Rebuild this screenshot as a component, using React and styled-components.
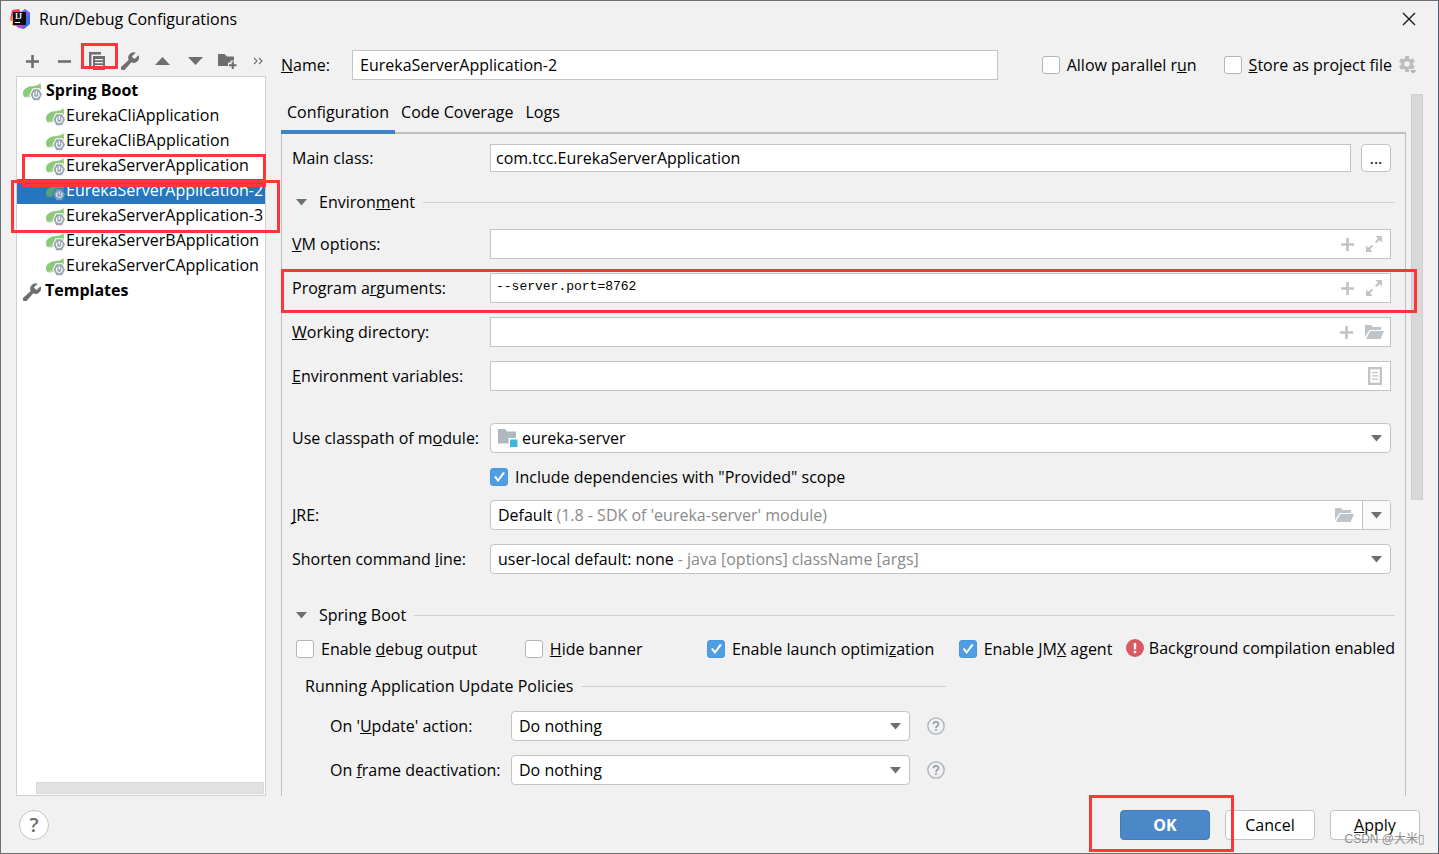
import React from 'react';
import styled, { createGlobalStyle } from 'styled-components';

const GlobalStyle = createGlobalStyle`
	:root {
		--main-text-color: #000;
		--gray-text-color: #8a8a8a;
		--panel-color: #f1f1f1;
		--border-color: #c4c4c4;
		--line-color: #d0d0d0;
		--icon-color: #6e6e6e;
		--light-icon-color: #bfc4c8;
		--accent-color: #4083c9;
		--mark-color: #fb3737;
	}

	* {
		box-sizing: border-box;
	}

	body {
		margin: 0;
		background: var(--panel-color);
	}

	body, button, input, select {
		font-family: 'Open Sans', 'Noto Sans', 'Noto Sans CJK SC', sans-serif;
		font-size: 16px;
		line-height: 22px;
		color: var(--main-text-color);
	}

	u {
		text-decoration-skip-ink: none;
	}

	svg {
		flex: none;
	}
`;

const Dialog = styled.div`
	position: relative;
	display: flex;
	flex-direction: column;
	min-height: 100vh;
	border: 1px solid #6f6f6f;
	border-right-color: #4f5b66;
	background: var(--panel-color);
`;

const TitleBar = styled.header`
	display: flex;
	align-items: center;
	gap: 8px;
	height: 37px;
	padding: 0 22px 2px 9px;
`;

const Title = styled.h1`
	flex: 1;
	margin: 0;
	font-size: 16px;
	font-weight: normal;
`;

const IconButton = styled.button`
	position: relative;
	display: flex;
	align-items: center;
	justify-content: ${({ $align }) => $align || 'center'};
	padding: 0;
	border: none;
	background: none;
	color: ${({ $light }) => ($light ? 'var(--light-icon-color)' : 'var(--icon-color)')};
`;

const Body = styled.div`
	flex: 1;
	display: flex;
	gap: 15px;
	padding: 0 15px;
`;

const Sidebar = styled.aside`
	display: flex;
	flex-direction: column;
	width: 250px;
	padding-top: 8px;
`;

const Toolbar = styled.div`
	display: grid;
	grid-template-columns: repeat(7, 1fr) 19px;
	height: 30px;
	padding-right: 3px;
`;

const Tree = styled.ul`
	flex: 1;
	display: flex;
	flex-direction: column;
	margin: 0;
	padding: 2px 0 0;
	border: 1px solid #d0d0d0;
	background: #fff;
	list-style: none;
`;

const TreeRow = styled.li`
	position: relative;
	display: flex;
	align-items: center;
	gap: ${({ $child }) => ($child ? 1 : 4)}px;
	height: 25px;
	padding-left: ${({ $child }) => ($child ? 29 : 6)}px;
	background: ${({ $selected }) => ($selected ? '#2675bf' : 'none')};
	color: ${({ $selected }) => ($selected ? '#fff' : 'inherit')};
	font-weight: ${({ $child }) => ($child ? 'normal' : 'bold')};
	white-space: nowrap;
`;

const TreeText = styled.span`
	padding-bottom: 3px;
`;

const TreeScroll = styled.li`
	height: 12px;
	margin: auto 1px 1px 19px;
	border: 1px solid #d8d8d8;
	background: #e2e2e2;
`;

const Main = styled.main`
	flex: 1;
	min-width: 0;
	display: flex;
	flex-direction: column;
	padding-top: 12px;
`;

const NameRow = styled.div`
	display: flex;
	align-items: center;
	height: 30px;
	padding-right: 6px;
`;

const NameLabel = styled.label`
	width: 71px;
`;

const NameInput = styled.input`
	flex: 1;
	min-width: 0;
	height: 30px;
	margin-right: 44px;
	padding: 0 7px;
	border: 1px solid var(--border-color);
	background: #fff;
`;

const CheckLabel = styled.label`
	display: flex;
	align-items: center;
	gap: 7px;
	height: 20px;
	white-space: nowrap;
`;

const Checkbox = styled.input`
	appearance: none;
	flex: none;
	width: 18px;
	height: 18px;
	margin: 0;
	border: 1px solid #b4b4b4;
	border-radius: 3px;
	background: #fff;

	&:checked {
		border-color: #4a96de;
		background: #4f9ee3;
	}

	&:checked::before {
		content: '';
		display: block;
		height: 16px;
		background: #fff;
		clip-path: polygon(3px 8px, 5px 7px, 7px 10px, 12px 3px, 14px 4px, 7px 13px);
	}
`;

const StoreGroup = styled.div`
	display: flex;
	align-items: center;
	gap: 7px;
	margin-left: 27px;
`;

const Content = styled.div`
	flex: 1;
	display: flex;
	gap: 5px;
	margin-top: 14px;
`;

const Pane = styled.div`
	flex: 1;
	min-width: 0;
	display: flex;
	flex-direction: column;
`;

const ScrollTrack = styled.div`
	width: 12px;
`;

const ScrollThumb = styled.div`
	height: 406px;
	border: 1px solid #cfcfcf;
	background: #d8d8d8;
`;

const Tabs = styled.div`
	display: flex;
	height: 40px;
	box-shadow: inset 0 -2px #bfbfbf;
`;

const Tab = styled.button`
	padding: 0 6px;
	border: none;
	border-bottom: 4px solid ${({ $active }) => ($active ? 'var(--accent-color)' : 'transparent')};
	background: none;
`;

const Panel = styled.div`
	flex: 1;
	padding: 10px;
	border: 1px solid #bfbfbf;
	border-width: 0 1px;
`;

const Field = styled.div`
	position: relative;
	display: grid;
	grid-template-columns: 198px minmax(0, 1fr);
	align-items: center;
	margin: ${({ $top = 14 }) => $top}px 4px 0 0;
`;

const FieldLabel = styled.label`
	white-space: nowrap;
`;

const InputRow = styled.div`
	display: flex;
	gap: 10px;
`;

const Box = styled.div`
	flex: 1;
	display: flex;
	align-items: center;
	height: ${({ $height = 30 }) => $height}px;
	padding-right: ${({ $iconPad = 8 }) => $iconPad}px;
	border: 1px solid var(--border-color);
	background: #fff;
`;

const TextInput = styled.input`
	flex: 1;
	min-width: 0;
	padding: 0 5px;
	border: none;
	outline: none;
	background: none;
`;

const CodeInput = styled(TextInput)`
	height: 22px;
	margin-bottom: 3px;
	font-family: 'Liberation Mono', monospace;
	font-size: 13px;
`;

const BoxIcons = styled.div`
	display: flex;
	align-items: center;
	gap: 12px;
`;

const MoreButton = styled.button`
	width: 30px;
	height: 28px;
	padding: 0;
	border: 1px solid var(--border-color);
	border-radius: 4px;
	background: #fff;
`;

const Section = styled.div`
	display: flex;
	align-items: center;
	gap: 8px;
	height: 22px;
	margin-top: ${({ $top }) => $top}px;
	padding-left: ${({ $indent = 4 }) => $indent}px;
	width: ${({ $width = '100%' }) => $width};
	white-space: nowrap;

	&::after {
		content: '';
		flex: 1;
		height: 1px;
		background: var(--line-color);
	}
`;

const SectionToggle = styled.button`
	display: flex;
	align-items: center;
	gap: 12px;
	padding: 0;
	border: none;
	background: none;
`;

const SelectBox = styled.div`
	position: relative;
	flex: 1;
	display: flex;
	align-items: center;
	height: 30px;
	padding-left: 7px;
	border: 1px solid var(--border-color);
	border-radius: 4px;
	background: #fff;
	white-space: nowrap;
`;

const Select = styled.select`
	appearance: none;
	flex: ${({ $fit }) => ($fit ? 'none' : '1')};
	field-sizing: ${({ $fit }) => ($fit ? 'content' : 'fixed')};
	height: 28px;
	padding: 0;
	border: none;
	outline: none;
	background: none;
`;

const Hint = styled.span`
	flex: 1;
	margin-left: 4px;
	color: var(--gray-text-color);
`;

const ArrowCell = styled.span`
	display: flex;
	align-items: center;
	justify-content: center;
	width: 28px;
	height: 28px;
	margin-left: 8px;
	border-left: 1px solid ${({ $divided }) => ($divided ? 'var(--border-color)' : 'transparent')};
	border-radius: 0 3px 3px 0;
	background: ${({ $divided }) => ($divided ? '#fafafa' : 'none')};
	pointer-events: none;
`;

const ModuleIcon = styled.span`
	display: flex;
	margin-right: 4px;
`;

const IncludeRow = styled.div`
	margin: 14px 0 -1px 198px;
`;

const Options = styled.div`
	display: grid;
	grid-template-columns: 230fr 183fr 253fr 168fr auto;
	align-items: center;
	height: 20px;
	margin-top: 11px;
	padding-left: 4px;
`;

const Warning = styled.div`
	display: flex;
	align-items: center;
	gap: 5px;
	padding-bottom: 2px;
	white-space: nowrap;
`;

const Policy = styled.div`
	display: flex;
	align-items: center;
	margin-top: 14px;
	padding-left: 38px;
`;

const PolicyLabel = styled(FieldLabel)`
	width: 181px;
`;

const PolicyControls = styled.div`
	display: flex;
	gap: 17px;
	width: 434px;
`;

const Footer = styled.footer`
	display: flex;
	align-items: center;
	gap: 15px;
	padding: 14px 18px 13px;
`;

const HelpButton = styled.button`
	width: 30px;
	height: 30px;
	margin-right: auto;
	padding: 0;
	border: 1px solid var(--border-color);
	border-radius: 50%;
	background: #fff;
	color: var(--icon-color);
	font-size: 20px;
	font-weight: 600;
`;

const FooterButton = styled.button`
	position: relative;
	width: 90px;
	height: 30px;
	padding: 0;
	border: 1px solid ${({ $primary }) => ($primary ? '#3f7dc0' : 'var(--border-color)')};
	border-radius: 4px;
	background: ${({ $primary }) => ($primary ? '#4c88c8' : '#fff')};
	color: ${({ $primary }) => ($primary ? '#fff' : 'inherit')};
	font-weight: ${({ $primary }) => ($primary ? 'bold' : 'normal')};
`;

const Mark = styled.span`
	position: absolute;
	z-index: 2;
	inset: ${({ $inset }) => $inset};
	border: 3px solid var(--mark-color);
	pointer-events: none;
`;

const Watermark = styled.span`
	position: absolute;
	right: 13px;
	bottom: 4px;
	z-index: 3;
	color: #8e8e8e;
	font-family: 'Liberation Sans', 'Noto Sans CJK SC', sans-serif;
	font-size: 12px;
	line-height: 20px;
	pointer-events: none;
`;

const LogoIcon = () => (
	<svg width="21" height="20" viewBox="0 0 21 20" aria-hidden="true">
		<path d="M2 1 L9 0 L12 5 L6 17 L2 16 L4 12 L0 11 Z" fill="#fb3b6c" />
		<path d="M0 11 L3 6 L6 17 L2 16 L3 13 Z" fill="#fb8a3c" />
		<path d="M11 3 L15 0 L20 4 L20 15 L14 20 L8 18 Z" fill="#3f6fe8" />
		<path d="M15 0 L20 4 L18 8 L12 4 Z" fill="#7a63f0" />
		<path d="M6 16 L14 16 L13 20 L7 18 Z" fill="#b04bd8" />
		<rect x="3" y="3" width="13" height="13" fill="#0b0b10" />
		<text x="5" y="10" fill="#fff" fontFamily="Liberation Serif, serif" fontSize="8" fontWeight="bold">IJ</text>
		<rect x="5" y="13" width="5" height="1" fill="#fff" />
	</svg>
);

const CloseIcon = () => (
	<svg width="14" height="14" viewBox="0 0 14 14" stroke="#1a1a1a" strokeWidth="1.4" aria-hidden="true">
		<path d="M1 1 L13 13 M13 1 L1 13" />
	</svg>
);

const PlusIcon = () => (
	<svg width="13" height="13" viewBox="0 0 13 13" fill="currentColor" aria-hidden="true">
		<path d="M5.2 0 H7.8 V5.2 H13 V7.8 H7.8 V13 H5.2 V7.8 H0 V5.2 H5.2 Z" />
	</svg>
);

const MinusIcon = () => (
	<svg width="13" height="13" viewBox="0 0 13 13" fill="currentColor" aria-hidden="true">
		<rect y="5.2" width="13" height="2.6" />
	</svg>
);

const CopyIcon = () => (
	<svg width="16" height="18" viewBox="0 0 16 18" fill="currentColor" aria-hidden="true">
		<path d="M0 0 H12 V2.4 H2.4 V14 H0 Z" />
		<path fillRule="evenodd" d="M4 4 H16 V18 H4 Z M6 7 V8.3 H14 V7 Z M6 10 V11.3 H14 V10 Z M6 13 V14.3 H14 V13 Z" />
	</svg>
);

const WrenchIcon = () => (
	<svg width="18" height="18" viewBox="2 2 20 20" fill="#6e6e6e" aria-hidden="true">
		<path d="M14.7 6.3a1 1 0 0 0 0 1.4l1.6 1.6a1 1 0 0 0 1.4 0l3.77-3.77a6 6 0 0 1-7.94 7.94l-7.4 8.2a2.4 2.4 0 0 1-3.8-3.2l8.2-7.62a6 6 0 0 1 7.94-7.94z" />
	</svg>
);

const UpIcon = () => (
	<svg width="15" height="8" viewBox="0 0 15 8" fill="currentColor" aria-hidden="true">
		<path d="M7.5 0 L15 8 H0 Z" />
	</svg>
);

const DownIcon = () => (
	<svg width="15" height="8" viewBox="0 0 15 8" fill="currentColor" aria-hidden="true">
		<path d="M0 0 H15 L7.5 8 Z" />
	</svg>
);

const ArrowIcon = () => (
	<svg width="11" height="7" viewBox="0 0 11 7" fill="#6e6e6e" aria-hidden="true">
		<path d="M0 0 H11 L5.5 6.5 Z" />
	</svg>
);

const NewFolderIcon = () => (
	<svg width="19" height="16" viewBox="0 0 19 16" fill="currentColor" aria-hidden="true">
		<path d="M0 1 H6.5 L9 3.5 H16 V7.5 H12.5 V9.5 H10 V13 H0 Z" />
		<path d="M13.7 8.5 H15.8 V11.2 H18.5 V13.3 H15.8 V16 H13.7 V13.3 H11 V11.2 H13.7 Z" />
	</svg>
);

const MoreIcon = () => (
	<svg width="10" height="8" viewBox="0 0 10 8" fill="none" stroke="currentColor" strokeWidth="1.1" aria-hidden="true">
		<path d="M1 1 L4 4 L1 7 M6 1 L9 4 L6 7" />
	</svg>
);

const SpringIcon = ({ selected }) => (
	<svg width="19" height="18" viewBox="0 0 19 18" aria-hidden="true">
		<path d="M17.3 0 C15 3 11.5 2.8 8 3.3 C3 4 0 7 0 10.3 C0 12.4 .8 13.6 2 14.3 C5 15 7.5 14 8.5 12.5 L17.5 8.5 C18.2 5.5 18 2.5 17.3 0 Z" fill={selected ? '#55a377' : '#8cc97a'} />
		<path d="M2 14.5 C7 13 12 10.5 16 6" stroke={selected ? '#2675bf' : '#fff'} strokeOpacity=".5" fill="none" />
		<path d="M9.7 5.2 H16.7 L20 11.4 L16.7 18 H9.7 L6.6 11.4 Z" fill={selected ? '#2675bf' : '#fff'} />
		<path d="M10.4 6.2 H16 L19 11.6 L16 17.2 H10.4 L7.5 11.6 Z" fill={selected ? '#7f9cb8' : '#9aa7b3'} />
		<path d="M11.4 9.6 A2.8 2.8 0 1 0 15.1 9.6 M13.25 8 V11.8" stroke={selected ? '#dbe7f3' : '#fff'} strokeWidth="1.2" fill="none" />
	</svg>
);

const GearIcon = () => (
	<svg width="18" height="18" viewBox="0 0 18 18" fill="#bdbdbd" aria-hidden="true">
		{[0, 60, 120].map((angle) => (
			<rect key={angle} x="6" y="0" width="4" height="16" transform={`rotate(${angle} 8 8)`} />
		))}
		<circle cx="8" cy="8" r="6" />
		<circle cx="8" cy="8" r="2.8" fill="#f1f1f1" />
		<path d="M9.5 13 H18 V14 L14 18 Z" fill="#f1f1f1" />
		<path d="M11 14.3 H17.4 L14.2 17.6 Z" fill="#a8a8a8" />
	</svg>
);

const ExpandIcon = () => (
	<svg width="16" height="16" viewBox="0 0 16 16" fill="currentColor" aria-hidden="true">
		<path d="M9.5 0 H16 V6.5 L13.7 4.2 L10.2 7.2 L9 6 L11.9 2.4 Z" />
		<path d="M0 9.5 L2.3 11.8 L5.8 8.8 L7 10 L4.1 13.6 L6.5 16 H0 Z" />
	</svg>
);

const FolderIcon = () => (
	<svg width="19" height="14" viewBox="0 0 19 14" fill="currentColor" aria-hidden="true">
		<path d="M0 0 H6 L8 2 H16 V5 H4.5 L0 12 Z" />
		<path d="M5.3 6 H19 L15.6 14 H1 Z" />
	</svg>
);

const ListIcon = () => (
	<svg width="14" height="18" viewBox="0 0 14 18" fill="currentColor" aria-hidden="true">
		<path fillRule="evenodd" d="M0 0 H14 V18 H0 Z M2.3 2.3 V15.7 H11.7 V2.3 Z" />
		<path d="M4 5 H10 V6.2 H4 Z M4 8.3 H10 V9.5 H4 Z M4 11.5 H10 V12.7 H4 Z" />
	</svg>
);

const ModuleFolderIcon = () => (
	<svg width="20" height="18" viewBox="0 0 20 18" aria-hidden="true">
		<path d="M0 0 H7 L9 2.5 H18 V9 H10.5 V14.5 H0 Z" fill="#afb8bf" />
		<rect x="12" y="10.5" width="7.5" height="7.5" fill="#40b6e0" />
	</svg>
);

const WarningIcon = () => (
	<svg width="18" height="18" viewBox="0 0 18 18" aria-hidden="true">
		<circle cx="9" cy="9" r="9" fill="#db5860" />
		<rect x="7.8" y="4" width="2.4" height="6.4" fill="#fff" />
		<rect x="7.8" y="11.8" width="2.4" height="2.4" fill="#fff" />
	</svg>
);

const QuestionIcon = () => (
	<svg width="18" height="18" viewBox="0 0 18 18" fill="none" stroke="#a8b0b6" aria-hidden="true">
		<circle cx="9" cy="9" r="8.2" strokeWidth="1.3" />
		<path d="M6.5 7.2 C6.5 4 11.5 4 11.5 7 C11.5 8.9 9 8.9 9 11" stroke="#8f979d" strokeWidth="1.5" />
		<path d="M9 12.1 V13.7" stroke="#8f979d" strokeWidth="1.6" />
	</svg>
);

const applications = [
	{ name: 'EurekaCliApplication' },
	{ name: 'EurekaCliBApplication' },
	{ name: 'EurekaServerApplication', mark: '0 -1px -8px 5px' },
	{ name: 'EurekaServerApplication-2', selected: true, mark: '1px -15px -29px -6px' },
	{ name: 'EurekaServerApplication-3' },
	{ name: 'EurekaServerBApplication' },
	{ name: 'EurekaServerCApplication' },
];

const Check = ({ checked, children }) => (
	<CheckLabel>
		<Checkbox type="checkbox" defaultChecked={checked} />
		<span>{children}</span>
	</CheckLabel>
);

const PolicyRow = ({ id, label }) => (
	<Policy>
		<PolicyLabel htmlFor={id}>{label}</PolicyLabel>
		<PolicyControls>
			<SelectBox>
				<Select id={id}>
					<option>Do nothing</option>
				</Select>
				<ArrowCell><ArrowIcon /></ArrowCell>
			</SelectBox>
			<IconButton aria-label="Help"><QuestionIcon /></IconButton>
		</PolicyControls>
	</Policy>
);

const App = () => {
	return (
		<>
			<GlobalStyle />
			<Dialog>
				<TitleBar>
					<LogoIcon />
					<Title>Run/Debug Configurations</Title>
					<IconButton aria-label="Close"><CloseIcon /></IconButton>
				</TitleBar>
				<Body>
					<Sidebar>
						<Toolbar>
							<IconButton aria-label="Add"><PlusIcon /></IconButton>
							<IconButton aria-label="Remove"><MinusIcon /></IconButton>
							<IconButton aria-label="Copy">
								<CopyIcon />
								<Mark $inset="-3px -4px 7px 0" />
							</IconButton>
							<IconButton aria-label="Edit templates"><WrenchIcon /></IconButton>
							<IconButton aria-label="Move up"><UpIcon /></IconButton>
							<IconButton aria-label="Move down"><DownIcon /></IconButton>
							<IconButton aria-label="New folder"><NewFolderIcon /></IconButton>
							<IconButton aria-label="More" $align="flex-end"><MoreIcon /></IconButton>
						</Toolbar>
						<Tree>
							<TreeRow><SpringIcon /><TreeText>Spring Boot</TreeText></TreeRow>
							{applications.map(({ name, selected, mark }) => (
								<TreeRow key={name} $child $selected={selected}>
									<SpringIcon selected={selected} />
									<TreeText>{name}</TreeText>
									{mark && <Mark $inset={mark} />}
								</TreeRow>
							))}
							<TreeRow><WrenchIcon /><TreeText>Templates</TreeText></TreeRow>
							<TreeScroll aria-hidden="true" />
						</Tree>
					</Sidebar>
					<Main>
						<NameRow>
							<NameLabel htmlFor="name"><u>N</u>ame:</NameLabel>
							<NameInput id="name" defaultValue="EurekaServerApplication-2" />
							<Check>Allow parallel r<u>u</u>n</Check>
							<StoreGroup>
								<Check><u>S</u>tore as project file</Check>
								<IconButton aria-label="Storage settings"><GearIcon /></IconButton>
							</StoreGroup>
						</NameRow>
						<Content>
							<Pane>
								<Tabs role="tablist">
									<Tab role="tab" aria-selected="true" $active>Configuration</Tab>
									<Tab role="tab">Code Coverage</Tab>
									<Tab role="tab">Logs</Tab>
								</Tabs>
								<Panel>
									<Field $top={0}>
										<FieldLabel htmlFor="main-class">Main class:</FieldLabel>
										<InputRow>
											<Box $height={28}>
												<TextInput id="main-class" defaultValue="com.tcc.EurekaServerApplication" />
											</Box>
											<MoreButton aria-label="Browse classes">...</MoreButton>
										</InputRow>
									</Field>
									<Section $top={19}>
										<SectionToggle><ArrowIcon /><span>Environ<u>m</u>ent</span></SectionToggle>
									</Section>
									<Field $top={16}>
										<FieldLabel htmlFor="vm-options"><u>V</u>M options:</FieldLabel>
										<Box>
											<TextInput id="vm-options" />
											<BoxIcons>
												<IconButton $light aria-label="Insert macro"><PlusIcon /></IconButton>
												<IconButton $light aria-label="Expand"><ExpandIcon /></IconButton>
											</BoxIcons>
										</Box>
									</Field>
									<Field>
										<FieldLabel htmlFor="program-arguments">Program a<u>r</u>guments:</FieldLabel>
										<Box>
											<CodeInput id="program-arguments" defaultValue="--server.port=8762" />
											<BoxIcons>
												<IconButton $light aria-label="Insert macro"><PlusIcon /></IconButton>
												<IconButton $light aria-label="Expand"><ExpandIcon /></IconButton>
											</BoxIcons>
										</Box>
										<Mark $inset="-4px -26px -10px -11px" />
									</Field>
									<Field>
										<FieldLabel htmlFor="working-directory"><u>W</u>orking directory:</FieldLabel>
										<Box $iconPad={6}>
											<TextInput id="working-directory" />
											<BoxIcons>
												<IconButton $light aria-label="Insert macro"><PlusIcon /></IconButton>
												<IconButton $light aria-label="Browse"><FolderIcon /></IconButton>
											</BoxIcons>
										</Box>
									</Field>
									<Field>
										<FieldLabel htmlFor="environment-variables"><u>E</u>nvironment variables:</FieldLabel>
										<Box>
											<TextInput id="environment-variables" />
											<IconButton $light aria-label="Edit variables"><ListIcon /></IconButton>
										</Box>
									</Field>
									<Field $top={32}>
										<FieldLabel htmlFor="module">Use classpath of m<u>o</u>dule:</FieldLabel>
										<SelectBox>
											<ModuleIcon><ModuleFolderIcon /></ModuleIcon>
											<Select id="module">
												<option>eureka-server</option>
											</Select>
											<ArrowCell><ArrowIcon /></ArrowCell>
										</SelectBox>
									</Field>
									<IncludeRow>
										<Check checked>Include dependencies with "Provided" scope</Check>
									</IncludeRow>
									<Field>
										<FieldLabel htmlFor="jre"><u>J</u>RE:</FieldLabel>
										<SelectBox>
											<Select id="jre" $fit>
												<option>Default</option>
											</Select>
											<Hint>(1.8 - SDK of 'eureka-server' module)</Hint>
											<IconButton $light aria-label="Browse"><FolderIcon /></IconButton>
											<ArrowCell $divided><ArrowIcon /></ArrowCell>
										</SelectBox>
									</Field>
									<Field>
										<FieldLabel htmlFor="shorten">Shorten command <u>l</u>ine:</FieldLabel>
										<SelectBox>
											<Select id="shorten" $fit>
												<option>user-local default: none</option>
											</Select>
											<Hint>- java [options] className [args]</Hint>
											<ArrowCell><ArrowIcon /></ArrowCell>
										</SelectBox>
									</Field>
									<Section $top={30}>
										<SectionToggle><ArrowIcon /><span>Sprin<u>g</u> Boot</span></SectionToggle>
									</Section>
									<Options>
										<Check>Enable <u>d</u>ebug output</Check>
										<Check><u>H</u>ide banner</Check>
										<Check checked>Enable launch optimi<u>z</u>ation</Check>
										<Check checked>Enable JM<u>X</u> agent</Check>
										<Warning><WarningIcon />Background compilation enabled</Warning>
									</Options>
									<Section $top={18} $indent={13} $width="654px">
										Running Application Update Policies
									</Section>
									<PolicyRow id="on-update" label={<>On '<u>U</u>pdate' action:</>} />
									<PolicyRow id="on-frame" label={<>On <u>f</u>rame deactivation:</>} />
								</Panel>
							</Pane>
							<ScrollTrack aria-hidden="true">
								<ScrollThumb />
							</ScrollTrack>
						</Content>
					</Main>
				</Body>
				<Footer>
					<HelpButton aria-label="Help">?</HelpButton>
					<FooterButton $primary>
						OK
						<Mark $inset="-16px -25px -13px -32px" />
					</FooterButton>
					<FooterButton>Cancel</FooterButton>
					<FooterButton><u>A</u>pply</FooterButton>
				</Footer>
				<Watermark>CSDN @大米▯</Watermark>
			</Dialog>
		</>
	);
};

export default App;
